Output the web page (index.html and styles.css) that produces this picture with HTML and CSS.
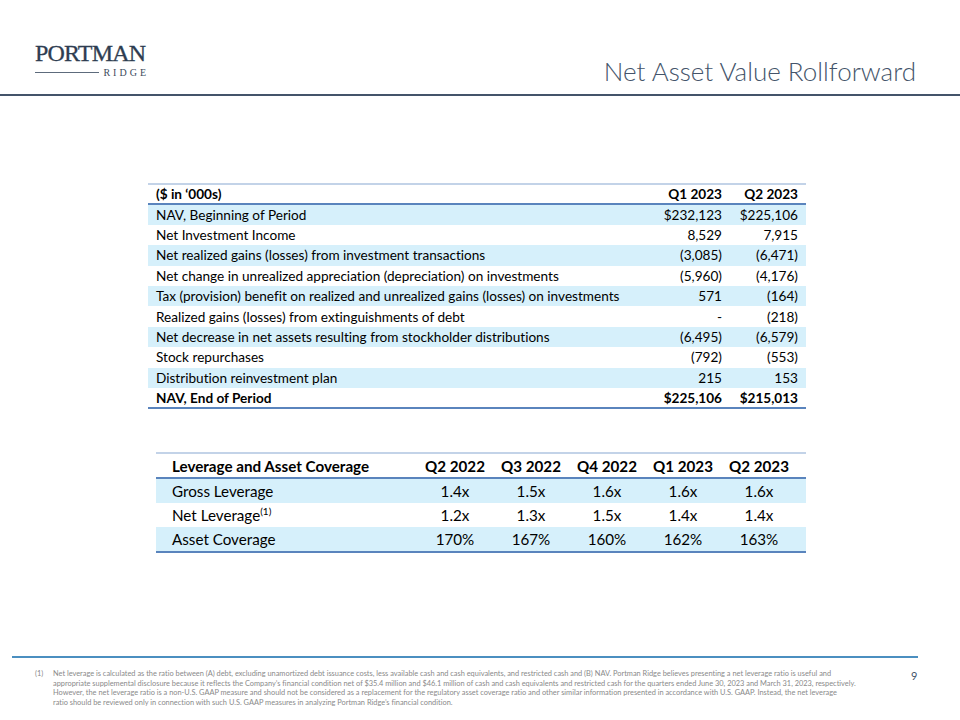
FILE: index.html
```html
<!DOCTYPE html>
<html>
<head>
<meta charset="utf-8">
<link rel="stylesheet" href="styles.css">
</head>
<body>
<div class="slide">
  <header class="top">
    <div class="logo">
      <div class="logo-main">PORTMAN</div>
      <div class="logo-sub"><span class="logo-line"></span><span class="logo-ridge">RIDGE</span></div>
    </div>
    <h1 class="title">Net Asset Value Rollforward</h1>
  </header>
  <div class="rule"></div>

  <table class="nav">
    <thead>
      <tr><th class="lbl">($ in ‘000s)</th><th class="num">Q1 2023</th><th class="num">Q2 2023</th></tr>
    </thead>
    <tbody>
      <tr class="alt"><td class="lbl">NAV, Beginning of Period</td><td class="num">$232,123</td><td class="num">$225,106</td></tr>
      <tr><td class="lbl">Net Investment Income</td><td class="num">8,529</td><td class="num">7,915</td></tr>
      <tr class="alt"><td class="lbl">Net realized gains (losses) from investment transactions</td><td class="num">(3,085)</td><td class="num">(6,471)</td></tr>
      <tr><td class="lbl">Net change in unrealized appreciation (depreciation) on investments</td><td class="num">(5,960)</td><td class="num">(4,176)</td></tr>
      <tr class="alt"><td class="lbl">Tax (provision) benefit on realized and unrealized gains (losses) on investments</td><td class="num">571</td><td class="num">(164)</td></tr>
      <tr><td class="lbl">Realized gains (losses) from extinguishments of debt</td><td class="num">-</td><td class="num">(218)</td></tr>
      <tr class="alt"><td class="lbl">Net decrease in net assets resulting from stockholder distributions</td><td class="num">(6,495)</td><td class="num">(6,579)</td></tr>
      <tr><td class="lbl">Stock repurchases</td><td class="num">(792)</td><td class="num">(553)</td></tr>
      <tr class="alt"><td class="lbl">Distribution reinvestment plan</td><td class="num">215</td><td class="num">153</td></tr>
      <tr class="total"><td class="lbl">NAV, End of Period</td><td class="num">$225,106</td><td class="num">$215,013</td></tr>
    </tbody>
  </table>

  <table class="lev">
    <colgroup>
      <col class="c-lbl"><col class="c-q"><col class="c-q"><col class="c-q"><col class="c-q"><col class="c-last">
    </colgroup>
    <thead>
      <tr><th class="lbl">Leverage and Asset Coverage</th><th>Q2 2022</th><th>Q3 2022</th><th>Q4 2022</th><th>Q1 2023</th><th class="last">Q2 2023</th></tr>
    </thead>
    <tbody>
      <tr class="alt"><td class="lbl">Gross Leverage</td><td>1.4x</td><td>1.5x</td><td>1.6x</td><td>1.6x</td><td class="last">1.6x</td></tr>
      <tr><td class="lbl">Net Leverage<sup>(1)</sup></td><td>1.2x</td><td>1.3x</td><td>1.5x</td><td>1.4x</td><td class="last">1.4x</td></tr>
      <tr class="alt"><td class="lbl">Asset Coverage</td><td>170%</td><td>167%</td><td>160%</td><td>162%</td><td class="last">163%</td></tr>
    </tbody>
  </table>

  <footer class="foot">
    <div class="foot-line"></div>
    <div class="foot-body">
      <div class="note-num">(1)</div>
      <div class="note-text">Net leverage is calculated as the ratio between (A) debt, excluding unamortized debt issuance costs, less available cash and cash equivalents, and restricted cash and (B) NAV. Portman Ridge believes presenting a net leverage ratio is useful and<br>appropriate supplemental disclosure because it reflects the Company’s financial condition net of $35.4 million and $46.1 million of cash and cash equivalents and restricted cash for the quarters ended June 30, 2023 and March 31, 2023, respectively.<br>However, the net leverage ratio is a non-U.S. GAAP measure and should not be considered as a replacement for the regulatory asset coverage ratio and other similar information presented in accordance with U.S. GAAP. Instead, the net leverage<br>ratio should be reviewed only in connection with such U.S. GAAP measures in analyzing Portman Ridge’s financial condition.</div>
      <div class="page">9</div>
    </div>
  </footer>
</div>
</body>
</html>
```

FILE: styles.css
```css
* { box-sizing: border-box; }
html, body { margin: 0; padding: 0; background: #ffffff; }
.slide {
  width: 960px;
  height: 720px;
  overflow: hidden;
  font-family: "Lato", "Open Sans", sans-serif;
  font-variant-ligatures: no-common-ligatures;
  color: #000;
  display: flex;
  flex-direction: column;
}
.top {
  height: 94px;
  display: flex;
  justify-content: space-between;
  align-items: flex-start;
  padding: 0 44px 0 35px;
}
.logo { margin-top: 40px; width: 111px; }
.logo-main {
  font-family: "Liberation Serif", "DejaVu Serif", serif;
  font-size: 24px;
  line-height: 27px;
  color: #2e3d51;
  letter-spacing: -0.8px;
  -webkit-text-stroke: 0.3px #2e3d51;
  white-space: nowrap;
}
.logo-sub { display: flex; align-items: center; gap: 4px; margin-top: 0px; }
.logo-line { flex: 1; height: 1px; background: #5d6b7c; }
.logo-ridge {
  font-family: "Liberation Serif", serif;
  font-size: 10px;
  line-height: 11px;
  letter-spacing: 3px;
  color: #3d4b5d;
  margin-right: -3px;
}
.title {
  margin: 55px 0 0 0;
  font-weight: 300;
  font-size: 26px;
  line-height: 32px;
  color: #44546a;
}
.rule { height: 2px; background: #44546a; }

table { border-collapse: collapse; }
.nav {
  margin: 87px 0 0 148px;
  width: 658px;
  font-size: 13.6px;
  border-top: 2px solid #c3d3e8;
  border-bottom: 2px solid #5a84bd;
}
.nav th, .nav td { height: 20.4px; padding: 0 8px; line-height: 16px; }
.nav th { font-weight: bold; text-align: left; border-bottom: 2px solid #5a84bd; }
.nav .num { text-align: right; width: 76px; white-space: nowrap; }
.nav .alt { background: #d6f0fb; }
.nav .total td { font-weight: bold; }

.lev {
  margin: 43px 0 0 156px;
  width: 650px;
  table-layout: fixed;
  font-size: 15.2px;
  border-top: 2px solid #c3d3e8;
  border-bottom: 2px solid #5a84bd;
}
.c-lbl { width: 261px; }
.c-q { width: 76px; }
.c-last { width: 85px; }
.lev th { font-weight: bold; height: 25px; border-bottom: 2px solid #5a84bd; text-align: center; }
.lev td { height: 24.5px; text-align: center; }
.lev th, .lev td { padding: 0; line-height: 18px; white-space: nowrap; }
.lev .last { padding-right: 9px; }
.lev .lbl { text-align: left; padding-left: 16px; }
.lev .alt { background: #d6f0fb; }
.lev sup { font-size: 10px; line-height: 0; vertical-align: 6px; }

.foot { margin-top: auto; margin-bottom: 12px; }
.foot-line { height: 2px; background: #4b8fc0; margin: 0 42px 0 12px; }
.foot-body { display: flex; padding: 11px 0 0 35px; color: #8a8a8a; font-size: 7.4px; line-height: 9.8px; }
.note-num { width: 18px; }
.note-text { white-space: nowrap; flex: 1; }
.page { color: #44546a; font-size: 11px; width: 49px; padding-top: 2px; }
```
